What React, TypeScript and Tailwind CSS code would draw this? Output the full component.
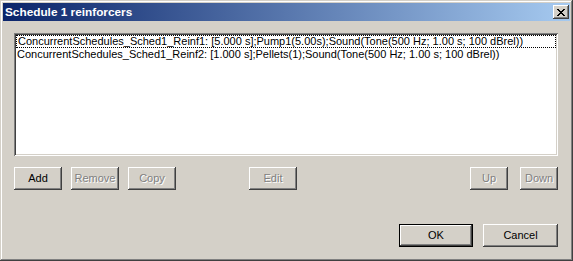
import React from "react";

const raised =
  "shadow-[inset_-1px_-1px_0_#404040,inset_1px_1px_0_#ffffff,inset_-2px_-2px_0_#808080,inset_2px_2px_0_#d4d0c8]";

function Btn({
  label,
  w,
  disabled,
  def,
  className = "",
}: {
  label: string;
  w: string;
  disabled?: boolean;
  def?: boolean;
  className?: string;
}) {
  if (def) {
    return (
      <div className={`${w} h-[23px] border border-black ${className}`}>
        <div className={`flex h-full w-full items-center justify-center bg-[#d4d0c8] text-black ${raised}`}>
          {label}
        </div>
      </div>
    );
  }
  return (
    <div
      className={`flex ${w} h-[23px] items-center justify-center bg-[#d4d0c8] ${raised} ${
        disabled ? "text-[#808080] [text-shadow:1px_1px_0_#ffffff]" : "text-black"
      } ${className}`}
    >
      {label}
    </div>
  );
}

export default function App() {
  const items = [
    "ConcurrentSchedules_Sched1_Reinf1: [5.000 s];Pump1(5.00s);Sound(Tone(500 Hz; 1.00 s; 100 dBrel))",
    "ConcurrentSchedules_Sched1_Reinf2: [1.000 s];Pellets(1);Sound(Tone(500 Hz; 1.00 s; 100 dBrel))",
  ];

  return (
    <div
      className="flex h-[261px] w-[573px] flex-col bg-[#d4d0c8] p-[3px] text-[11px] leading-[13px] text-black shadow-[inset_-1px_-1px_0_#404040,inset_1px_1px_0_#d4d0c8,inset_-2px_-2px_0_#808080,inset_2px_2px_0_#ffffff]"
      style={{ fontFamily: '"Liberation Sans", Arial, sans-serif' }}
    >
      {/* title bar */}
      <div className="flex h-[18px] items-center justify-between bg-[linear-gradient(to_right,#0a246a,#a6caf0)] pl-[2px] pr-[1px]">
        <span className="text-[11.8px] font-bold text-white">Schedule 1 reinforcers</span>
        <div className={`flex h-[14px] w-[16px] items-center justify-center bg-[#d4d0c8] ${raised}`}>
          <svg width="8" height="7" viewBox="0 0 8 7" shapeRendering="crispEdges">
            <path
              d="M0 0h2v1H0zM6 0h2v1H6zM1 1h2v1H1zM5 1h2v1H5zM2 2h4v1H2zM3 3h2v1H3zM2 4h4v1H2zM1 5h2v1H1zM5 5h2v1H5zM0 6h2v1H0zM6 6h2v1H6z"
              fill="#000"
            />
          </svg>
        </div>
      </div>

      <div className="flex flex-1 flex-col pl-[11px] pr-[12px]">
        {/* list box */}
        <div className="mt-[12px] h-[123px] w-[544px] bg-white p-[2px] shadow-[inset_1px_1px_0_#808080,inset_-1px_-1px_0_#ffffff,inset_2px_2px_0_#404040,inset_-2px_-2px_0_#d4d0c8]">
          {items.map((t, i) => (
            <div
              key={i}
              className={`h-[13px] whitespace-nowrap pl-[1px] ${
                i === 0 ? "border border-dotted border-black leading-[11px]" : ""
              }`}
            >
              {t}
            </div>
          ))}
        </div>

        {/* action buttons */}
        <div className="mt-[11px] flex">
          <Btn label="Add" w="w-[48px]" />
          <Btn label="Remove" w="w-[48px]" disabled className="ml-[9px]" />
          <Btn label="Copy" w="w-[48px]" disabled className="ml-[9px]" />
          <Btn label="Edit" w="w-[48px]" disabled className="ml-[73px]" />
          <div className="flex-1" />
          <Btn label="Up" w="w-[38px]" disabled />
          <Btn label="Down" w="w-[38px]" disabled className="ml-[12px]" />
        </div>

        {/* dialog buttons */}
        <div className="mt-[34px] flex justify-end gap-[10px]">
          <Btn label="OK" w="w-[74px]" def />
          <Btn label="Cancel" w="w-[75px]" />
        </div>
      </div>
    </div>
  );
}
